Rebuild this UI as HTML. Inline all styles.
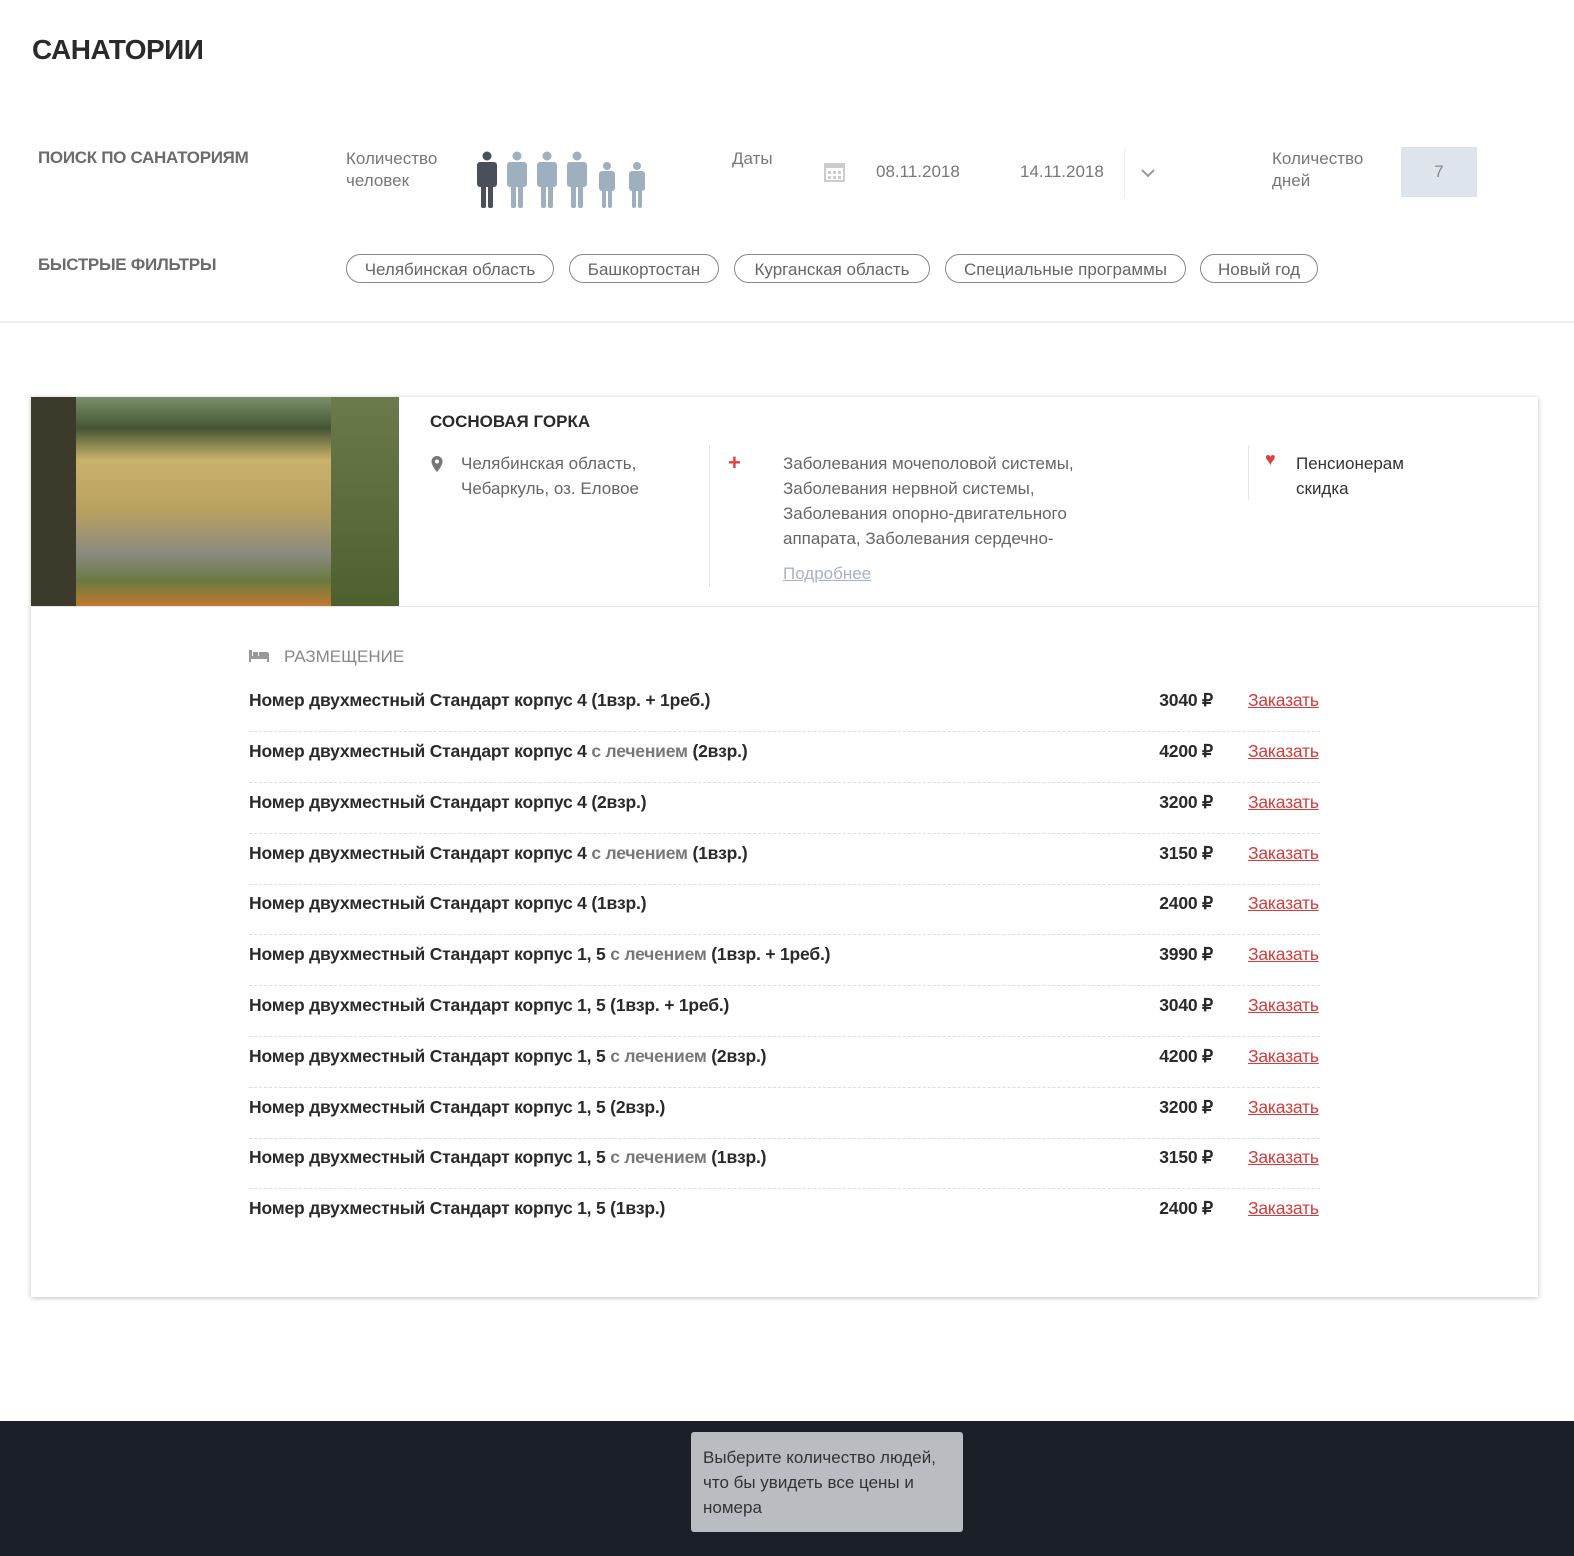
<!DOCTYPE html>
<html><head><meta charset="utf-8"><style>
body{margin:0;width:1574px;height:1556px;position:relative;background:#fff;font-family:"Liberation Sans",Arial,sans-serif;color:#333;overflow:hidden}
.a{position:absolute}
h1{position:absolute;left:32px;top:34px;margin:0;font-size:28px;font-weight:bold;color:#2a2a2a;letter-spacing:-0.5px}
.lbl{font-size:17px;font-weight:bold;color:#6b6b6b;letter-spacing:-0.3px}
.g{font-size:17px;color:#777;line-height:22px}
.chip{position:absolute;top:254px;height:29px;border:1px solid #888;border-radius:16px;font-size:17px;color:#666;line-height:29px;text-align:center;box-sizing:border-box}
.card{position:absolute;left:31px;top:397px;width:1507px;height:900px;background:#fff;box-shadow:0 1px 5px rgba(0,0,0,.25)}
.row{position:absolute;left:249px;width:1071px;height:51px;font-size:17.5px;font-weight:bold;color:#2a2a2a;border-bottom:1px dashed #ddd;box-sizing:border-box;letter-spacing:-0.2px}
.row span.n{position:absolute;left:0;top:9px}
.row i{font-style:normal;color:#777}
.row .p{position:absolute;right:107px;top:9px}
.row .z{position:absolute;left:999px;top:9px;color:#d43b3b;text-decoration:underline;font-weight:normal}
</style></head><body>
<h1>САНАТОРИИ</h1>
<div class="a lbl" style="left:38px;top:148px">ПОИСК ПО САНАТОРИЯМ</div>
<div class="a lbl" style="left:38px;top:255px">БЫСТРЫЕ ФИЛЬТРЫ</div>
<div class="a g" style="left:346px;top:148px">Количество<br>человек</div>
<svg class="a" style="left:474px;top:150px" width="175" height="60">
<g fill="#9eb0c0">
<g fill="#4a5059"><circle cx="13" cy="6" r="4.5"/><rect x="3" y="12" width="20" height="25" rx="3"/><rect x="7" y="30" width="5" height="28" rx="2"/><rect x="14" y="30" width="5" height="28" rx="2"/></g>
<g transform="translate(30,0)"><circle cx="13" cy="6" r="4.5"/><rect x="3" y="12" width="20" height="25" rx="3"/><rect x="7" y="30" width="5" height="28" rx="2"/><rect x="14" y="30" width="5" height="28" rx="2"/></g>
<g transform="translate(60,0)"><circle cx="13" cy="6" r="4.5"/><rect x="3" y="12" width="20" height="25" rx="3"/><rect x="7" y="30" width="5" height="28" rx="2"/><rect x="14" y="30" width="5" height="28" rx="2"/></g>
<g transform="translate(90,0)"><circle cx="13" cy="6" r="4.5"/><rect x="3" y="12" width="20" height="25" rx="3"/><rect x="7" y="30" width="5" height="28" rx="2"/><rect x="14" y="30" width="5" height="28" rx="2"/></g>
<g transform="translate(123,0)"><circle cx="10" cy="16" r="4"/><rect x="2" y="21" width="16" height="20" rx="3"/><rect x="5" y="36" width="4" height="22" rx="2"/><rect x="11" y="36" width="4" height="22" rx="2"/></g>
<g transform="translate(153,0)"><circle cx="10" cy="16" r="4"/><rect x="2" y="21" width="16" height="20" rx="3"/><rect x="5" y="36" width="4" height="22" rx="2"/><rect x="11" y="36" width="4" height="22" rx="2"/></g>
</g></svg>
<div class="a g" style="left:732px;top:148px">Даты</div>
<svg class="a" style="left:824px;top:161px" width="21" height="21"><rect x="1" y="3" width="19" height="17" fill="none" stroke="#ccc" stroke-width="2"/><rect x="1" y="3" width="19" height="4" fill="#ccc"/><g fill="#ccc"><rect x="4" y="10" width="3" height="3"/><rect x="9" y="10" width="3" height="3"/><rect x="14" y="10" width="3" height="3"/><rect x="4" y="15" width="3" height="3"/><rect x="9" y="15" width="3" height="3"/><rect x="14" y="15" width="3" height="3"/></g></svg>
<div class="a g" style="left:876px;top:161px">08.11.2018</div>
<div class="a g" style="left:1020px;top:161px">14.11.2018</div>
<div class="a" style="left:1124px;top:148px;width:1px;height:50px;background:#eee"></div>
<svg class="a" style="left:1141px;top:168px" width="14" height="10"><path d="M1 2l6 6 6-6" fill="none" stroke="#999" stroke-width="2"/></svg>
<div class="a g" style="left:1272px;top:148px">Количество<br>дней</div>
<div class="a" style="left:1401px;top:147px;width:76px;height:50px;background:#dde4ec;color:#888;font-size:17px;text-align:center;line-height:50px">7</div>
<div class="chip" style="left:346px;width:208px">Челябинская область</div>
<div class="chip" style="left:569px;width:150px">Башкортостан</div>
<div class="chip" style="left:734px;width:196px">Курганская область</div>
<div class="chip" style="left:945px;width:241px">Специальные программы</div>
<div class="chip" style="left:1200px;width:118px">Новый год</div>
<div class="a" style="left:0;top:321px;width:1574px;height:3px;background:linear-gradient(#e4e4e4,#fff)"></div>

<div class="card">
<div class="a" style="left:0;top:0;width:368px;height:209px;background:linear-gradient(180deg,#7a8f6a 0%,#445533 15%,#c9b26a 30%,#b8a060 55%,#8a8a80 75%,#6a7a40 88%,#c07a30 100%)">
<div class="a" style="left:0;top:0;width:45px;height:209px;background:#3c3a2a"></div>
<div class="a" style="left:300px;top:0;width:68px;height:209px;background:linear-gradient(#6a7a4a,#4f6030)"></div>
</div>
<div class="a" style="left:399px;top:15px;font-size:17px;font-weight:bold;color:#2a2a2a">СОСНОВАЯ ГОРКА</div>
<svg class="a" style="left:400px;top:59px" width="12" height="16"><path d="M6 0a5.5 5.5 0 0 0-5.5 5.5C.5 10 6 16 6 16s5.5-6 5.5-10.5A5.5 5.5 0 0 0 6 0zm0 7.5a2 2 0 1 1 0-4 2 2 0 0 1 0 4z" fill="#777"/></svg>
<div class="a g" style="left:430px;top:54px;line-height:25px;color:#666">Челябинская область,<br>Чебаркуль, оз. Еловое</div>
<div class="a" style="left:678px;top:48px;width:1px;height:142px;background:#e6e6e6"></div>
<div class="a" style="left:697px;top:56px;color:#e04040;font-size:22px;font-weight:bold;line-height:20px">+</div>
<div class="a g" style="left:752px;top:54px;line-height:25px;color:#666">Заболевания мочеполовой системы,<br>Заболевания нервной системы,<br>Заболевания опорно-двигательного<br>аппарата, Заболевания сердечно-</div>
<div class="a g" style="left:752px;top:166px;color:#a5b4c4;text-decoration:underline">Подробнее</div>
<div class="a" style="left:1217px;top:48px;width:1px;height:55px;background:#e6e6e6"></div>
<div class="a" style="left:1234px;top:52px;color:#e04040;font-size:18px">♥</div>
<div class="a g" style="left:1265px;top:54px;line-height:25px;color:#333">Пенсионерам<br>скидка</div>
<div class="a" style="left:0;top:209px;width:1507px;height:1px;background:#e6e6e6"></div>
</div>

<svg class="a" style="left:249px;top:650px" width="20" height="12"><path d="M0 0h3v6h17v6h-2v-3H2v3H0z M4 2h5v4H4z M10 2h8a2 2 0 0 1 2 2v2H10z" fill="#999"/></svg>
<div class="a" style="left:284px;top:647px;font-size:17px;color:#888">РАЗМЕЩЕНИЕ</div>

<div class="row" style="top:681px"><span class="n">Номер двухместный Стандарт корпус 4 (1взр. + 1реб.)</span><span class="p">3040 ₽</span><span class="z">Заказать</span></div>
<div class="row" style="top:732px"><span class="n">Номер двухместный Стандарт корпус 4 <i>с лечением</i> (2взр.)</span><span class="p">4200 ₽</span><span class="z">Заказать</span></div>
<div class="row" style="top:783px"><span class="n">Номер двухместный Стандарт корпус 4 (2взр.)</span><span class="p">3200 ₽</span><span class="z">Заказать</span></div>
<div class="row" style="top:834px"><span class="n">Номер двухместный Стандарт корпус 4 <i>с лечением</i> (1взр.)</span><span class="p">3150 ₽</span><span class="z">Заказать</span></div>
<div class="row" style="top:884px"><span class="n">Номер двухместный Стандарт корпус 4 (1взр.)</span><span class="p">2400 ₽</span><span class="z">Заказать</span></div>
<div class="row" style="top:935px"><span class="n">Номер двухместный Стандарт корпус 1, 5 <i>с лечением</i> (1взр. + 1реб.)</span><span class="p">3990 ₽</span><span class="z">Заказать</span></div>
<div class="row" style="top:986px"><span class="n">Номер двухместный Стандарт корпус 1, 5 (1взр. + 1реб.)</span><span class="p">3040 ₽</span><span class="z">Заказать</span></div>
<div class="row" style="top:1037px"><span class="n">Номер двухместный Стандарт корпус 1, 5 <i>с лечением</i> (2взр.)</span><span class="p">4200 ₽</span><span class="z">Заказать</span></div>
<div class="row" style="top:1088px"><span class="n">Номер двухместный Стандарт корпус 1, 5 (2взр.)</span><span class="p">3200 ₽</span><span class="z">Заказать</span></div>
<div class="row" style="top:1138px"><span class="n">Номер двухместный Стандарт корпус 1, 5 <i>с лечением</i> (1взр.)</span><span class="p">3150 ₽</span><span class="z">Заказать</span></div>
<div class="row" style="top:1189px;border:none"><span class="n">Номер двухместный Стандарт корпус 1, 5 (1взр.)</span><span class="p">2400 ₽</span><span class="z">Заказать</span></div>

<div class="a" style="left:0;top:1421px;width:1574px;height:135px;background:#1b2028"></div>
<div class="a" style="left:691px;top:1432px;width:272px;height:100px;background:#b9bcc0;border-radius:3px;box-sizing:border-box;padding:13px 12px;font-size:17px;line-height:25px;color:#333">Выберите количество людей, что бы увидеть все цены и номера</div>
</body></html>
